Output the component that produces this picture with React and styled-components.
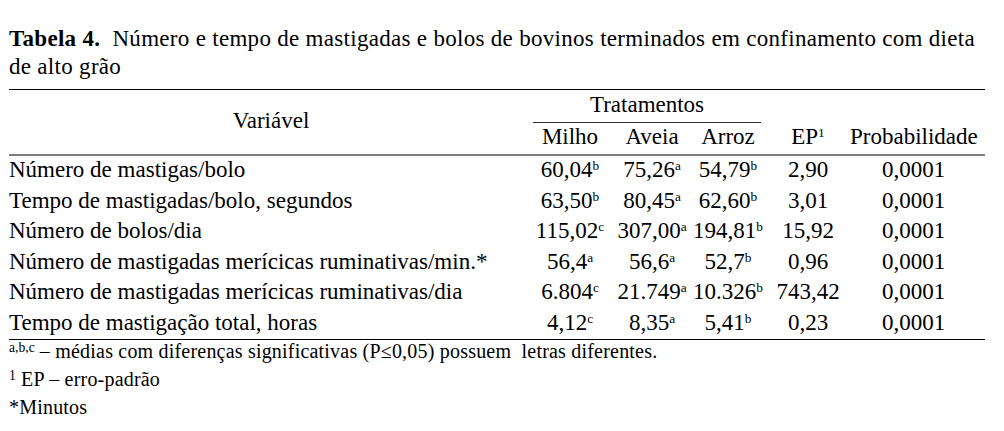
import React from "react";
import styled, { createGlobalStyle } from "styled-components";

const GlobalStyle = createGlobalStyle`
  html, body {
    margin: 0;
    padding: 0;
    background: #ffffff;
    color: #000000;
    font-family: "Liberation Serif", "Times New Roman", serif;
  }
`;

const Page = styled.div`
  width: 976px;
  padding: 25px 19px 0 9px;
`;

const Caption = styled.div`
  font-family: "Liberation Serif", "Times New Roman", serif;
  font-size: 23px;
  letter-spacing: 0.3px;
  line-height: 28px;
  white-space: nowrap;
`;

const CaptionLabel = styled.span`
  font-weight: 700;
`;

const Table = styled.table`
  margin-top: 8px;
  width: 976px;
  border-collapse: collapse;
  table-layout: fixed;
  font-family: "Liberation Serif", "Times New Roman", serif;
  font-size: 23px;
  border-top: 1px solid #000;
  border-bottom: 1px solid #000;
`;

const HeadRow = styled.tr`
  border-bottom: ${(p) => (p.$last ? "2px solid #7d7d7d" : "none")};
`;

const Th = styled.th`
  font-weight: 400;
  line-height: 28px;
  padding: ${(p) => (p.$top ? "1px 0 0" : "0 0 3px")};
  padding-left: ${(p) => p.$pl || "0"};
  padding-right: ${(p) => p.$pr || "0"};
  text-align: center;
  vertical-align: ${(p) => p.$valign || "bottom"};
  white-space: nowrap;
`;

const GroupLabel = styled.div`
  margin: 0 5px 0 7px;
  padding-bottom: 3px;
  border-bottom: 1px solid #333;
`;

const Td = styled.td`
  line-height: 28px;
  padding: 0 0 2.5px;
  padding-right: ${(p) => p.$pr || "0"};
  text-align: ${(p) => (p.$left ? "left" : "center")};
  white-space: nowrap;
`;

const Sup = styled.span`
  font-size: 58%;
  line-height: 0;
  vertical-align: 0.5em;
`;

const Notes = styled.div`
  font-family: "Liberation Serif", "Times New Roman", serif;
  font-size: 20px;
  letter-spacing: 0.2px;
  line-height: 28px;
  margin-top: -3px;
`;

const Note = styled.div`
  white-space: pre;
`;

const NoteSup = styled.span`
  font-size: 68%;
  letter-spacing: 0;
  line-height: 0;
  vertical-align: 0.45em;
`;

const rows = [
  ["Número de mastigas/bolo", ["60,04", "b"], ["75,26", "a"], ["54,79", "b"], "2,90", "0,0001"],
  ["Tempo de mastigadas/bolo, segundos", ["63,50", "b"], ["80,45", "a"], ["62,60", "b"], "3,01", "0,0001"],
  ["Número de bolos/dia", ["115,02", "c"], ["307,00", "a"], ["194,81", "b"], "15,92", "0,0001"],
  ["Número de mastigadas merícicas ruminativas/min.*", ["56,4", "a"], ["56,6", "a"], ["52,7", "b"], "0,96", "0,0001"],
  ["Número de mastigadas merícicas ruminativas/dia", ["6.804", "c"], ["21.749", "a"], ["10.326", "b"], "743,42", "0,0001"],
  ["Tempo de mastigação total, horas", ["4,12", "c"], ["8,35", "a"], ["5,41", "b"], "0,23", "0,0001"],
];

const Value = ({ v }) => (
  <>
    {v[0]}
    <Sup>{v[1]}</Sup>
  </>
);

export default function App() {
  return (
    <>
      <GlobalStyle />
      <Page>
        <Caption>
          <CaptionLabel>Tabela 4.</CaptionLabel>
          {"\u00a0 Número e tempo de mastigadas e bolos de bovinos terminados em confinamento com dieta"}
          <br />
          de alto grão
        </Caption>
        <Table>
          <colgroup>
            <col style={{ width: 517 }} />
            <col style={{ width: 88 }} />
            <col style={{ width: 76 }} />
            <col style={{ width: 76 }} />
            <col style={{ width: 84 }} />
            <col style={{ width: 135 }} />
          </colgroup>
          <thead>
            <HeadRow>
              <Th rowSpan={2} $valign="middle" $pl="7px">Variável</Th>
              <Th colSpan={3} $top>
                <GroupLabel>Tratamentos</GroupLabel>
              </Th>
              <Th rowSpan={2}>
                EP<Sup>1</Sup>
              </Th>
              <Th rowSpan={2} $pr="8px">Probabilidade</Th>
            </HeadRow>
            <HeadRow $last>
              <Th>Milho</Th>
              <Th>Aveia</Th>
              <Th>Arroz</Th>
            </HeadRow>
          </thead>
          <tbody>
            {rows.map((r) => (
              <tr key={r[0]}>
                <Td $left>{r[0]}</Td>
                <Td><Value v={r[1]} /></Td>
                <Td><Value v={r[2]} /></Td>
                <Td><Value v={r[3]} /></Td>
                <Td>{r[4]}</Td>
                <Td $pr="8px">{r[5]}</Td>
              </tr>
            ))}
          </tbody>
        </Table>
        <Notes>
          <Note>
            <NoteSup>a,b,c</NoteSup>
            {" – médias com diferenças significativas (P≤0,05) possuem  letras diferentes."}
          </Note>
          <Note>
            <NoteSup>1</NoteSup>
            {" EP – erro-padrão"}
          </Note>
          <Note>*Minutos</Note>
        </Notes>
      </Page>
    </>
  );
}
